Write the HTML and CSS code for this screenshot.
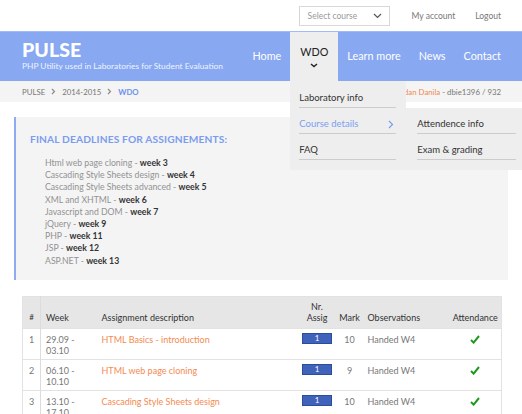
FILE: index.html
```html
<!DOCTYPE html>
<html lang="en">
<head>
<meta charset="utf-8">
<title>PULSE - WDO</title>
<link rel="stylesheet" href="styles.css">
</head>
<body>
<div class="topbar">
  <div class="select">Select course
    <svg class="select-chev" width="9" height="6" viewBox="0 0 9 6"><path d="M1 1l3.5 3.5L8 1" fill="none" stroke="#555" stroke-width="1.2"/></svg>
  </div>
  <a class="toplink" href="#">My account</a>
  <a class="toplink" href="#">Logout</a>
</div>

<header class="header">
  <div class="brand">
    <div class="logo">PULSE</div>
    <div class="tagline">PHP Utility used in Laboratories for Student Evaluation</div>
  </div>
  <nav class="nav">
    <a class="nav-link" href="#">Home</a>
    <div class="nav-link active">WDO
      <svg class="nav-chev" width="8" height="5" viewBox="0 0 8 5"><path d="M1 1l3 2.6L7 1" fill="none" stroke="#222" stroke-width="1.4"/></svg>
      <ul class="dropdown">
        <li class="dd-item">Laboratory info</li>
        <li class="dd-item current">Course details
          <svg class="dd-chev" width="6" height="9" viewBox="0 0 6 9"><path d="M1 1l3.5 3.5L1 8" fill="none" stroke="#7d9ef0" stroke-width="1.2"/></svg>
          <ul class="submenu">
            <li class="dd-item">Attendence info</li>
            <li class="dd-item">Exam &amp; grading</li>
          </ul>
        </li>
        <li class="dd-item">FAQ</li>
      </ul>
    </div>
    <a class="nav-link" href="#">Learn more</a>
    <a class="nav-link" href="#">News</a>
    <a class="nav-link" href="#">Contact</a>
  </nav>
</header>

<div class="crumbs">
  <div class="trail">
    <span>PULSE</span>
    <svg class="crumb-chev" width="5" height="7" viewBox="0 0 5 7"><path d="M1 1l2.5 2.5L1 6" fill="none" stroke="#888" stroke-width="1.1"/></svg>
    <span>2014-2015</span>
    <svg class="crumb-chev" width="5" height="7" viewBox="0 0 5 7"><path d="M1 1l2.5 2.5L1 6" fill="none" stroke="#888" stroke-width="1.1"/></svg>
    <span class="crumb-current">WDO</span>
  </div>
  <div class="user">Logged in as <span class="user-name">Bogdan Danila</span> - dbie1396 / 932</div>
</div>

<main class="content">
  <section class="deadlines">
    <h2 class="deadlines-title">FINAL DEADLINES FOR ASSIGNEMENTS:</h2>
    <ul class="deadlines-list">
      <li>Html web page cloning - <b>week 3</b></li>
      <li>Cascading Style Sheets design - <b>week 4</b></li>
      <li>Cascading Style Sheets advanced - <b>week 5</b></li>
      <li>XML and XHTML - <b>week 6</b></li>
      <li>Javascript and DOM - <b>week 7</b></li>
      <li>jQuery - <b>week 9</b></li>
      <li>PHP - <b>week 11</b></li>
      <li>JSP - <b>week 12</b></li>
      <li>ASP.NET - <b>week 13</b></li>
    </ul>
  </section>

  <table class="grades">
    <colgroup>
      <col class="c-num"><col class="c-week"><col class="c-desc"><col class="c-nr"><col class="c-mark"><col class="c-obs"><col class="c-att">
    </colgroup>
    <thead>
      <tr>
        <th class="num">#</th>
        <th>Week</th>
        <th>Assignment description</th>
        <th class="center">Nr.<br>Assig</th>
        <th class="center">Mark</th>
        <th>Observations</th>
        <th class="center">Attendance</th>
      </tr>
    </thead>
    <tbody>
      <tr>
        <td class="num">1</td>
        <td>29.09 -<br>03.10</td>
        <td><a class="task" href="#">HTML Basics - introduction</a></td>
        <td class="center"><span class="badge">1</span></td>
        <td class="center">10</td>
        <td>Handed W4</td>
        <td class="center"><svg class="check" width="10" height="9" viewBox="0 0 10 9"><path d="M1 5l2.6 2.6L9 1" fill="none" stroke="#1d9a1d" stroke-width="2"/></svg></td>
      </tr>
      <tr>
        <td class="num">2</td>
        <td>06.10 -<br>10.10</td>
        <td><a class="task" href="#">HTML web page cloning</a></td>
        <td class="center"><span class="badge">1</span></td>
        <td class="center">9</td>
        <td>Handed W4</td>
        <td class="center"><svg class="check" width="10" height="9" viewBox="0 0 10 9"><path d="M1 5l2.6 2.6L9 1" fill="none" stroke="#1d9a1d" stroke-width="2"/></svg></td>
      </tr>
      <tr>
        <td class="num">3</td>
        <td>13.10 -<br>17.10</td>
        <td><a class="task" href="#">Cascading Style Sheets design</a></td>
        <td class="center"><span class="badge">1</span></td>
        <td class="center">10</td>
        <td>Handed W4</td>
        <td class="center"><svg class="check" width="10" height="9" viewBox="0 0 10 9"><path d="M1 5l2.6 2.6L9 1" fill="none" stroke="#1d9a1d" stroke-width="2"/></svg></td>
      </tr>
    </tbody>
  </table>
</main>
</body>
</html>
```

FILE: styles.css
```css
* { box-sizing: border-box; }
html, body { margin: 0; padding: 0; }
body {
  font-family: Lato, "Open Sans", sans-serif;
  color: #444;
  background: #fff;
  overflow: hidden;
  width: 522px;
  height: 414px;
}
a { text-decoration: none; color: inherit; }
ul { list-style: none; margin: 0; padding: 0; }

.topbar {
  height: 31px;
  display: flex;
  align-items: center;
  justify-content: flex-end;
  padding-right: 21px;
  font-size: 8.5px;
  color: #777;
}
.select {
  width: 91px;
  height: 20px;
  border: 1px solid #d8d8d8;
  display: flex;
  align-items: center;
  justify-content: space-between;
  padding: 0 7px 0 8px;
  color: #999;
  margin-right: 22px;
}
.toplink { margin-left: 20px; }
.toplink:first-of-type { margin-left: 0; }

.header {
  height: 50px;
  background: #88a8f1;
  border-top: 1px solid #a3bbf5;
  display: flex;
  justify-content: space-between;
  padding-left: 22px;
  padding-right: 12px;
  color: #fff;
  white-space: nowrap;
}
.brand { padding-top: 7px; flex-shrink: 0; }
.logo { font-size: 19.5px; font-weight: 900; line-height: 22px; letter-spacing: 0.1px; }
.tagline { font-size: 8.4px; line-height: 11px; color: #eef3ff; }

.nav { display: flex; align-items: stretch; flex-shrink: 0; }
.nav-link {
  position: relative;
  display: flex;
  align-items: center;
  padding: 0 9px 2px;
  font-size: 10.8px;
  color: #fff;
}
.nav-link.active {
  background: #eeeeee;
  color: #222;
  flex-direction: column;
  justify-content: center;
  padding: 0 10px;
}
.nav-chev { display: block; margin-top: 5px; }

.dropdown {
  position: absolute;
  top: 100%;
  left: 0;
  width: 116px;
  background: #eeeeee;
  padding: 1px 0 10px;
  font-size: 9.5px;
  color: #333;
  z-index: 5;
}
.dd-item {
  position: relative;
  margin: 0 10px 0 9px;
  padding: 10px 0 4px;
  line-height: 11px;
  border-bottom: 1px solid #cccccc;
  white-space: nowrap;
}
.dd-item.current { color: #7d9ef0; }
.dd-chev { position: absolute; right: 2px; top: 12px; }
.submenu {
  position: absolute;
  left: calc(100% + 10px);
  top: 0;
  width: 116px;
  background: #eeeeee;
  padding: 0 0 10px;
  color: #333;
}
.submenu .dd-item { margin: 0 6px 0 11px; }

.crumbs {
  height: 21px;
  background: #f4f4f4;
  display: flex;
  align-items: center;
  justify-content: space-between;
  padding: 0 21px 0 22px;
  font-size: 7.8px;
  color: #777;
  white-space: nowrap;
}
.trail { display: flex; align-items: center; gap: 6px; }
.crumb-chev { display: block; }
.crumb-current { color: #6f92ea; font-weight: 700; }
.user-name { color: #f08850; }

.content { padding: 15px 14px 0; }
.deadlines {
  background: #f4f4f4;
  border-left: 2px solid #8eabf1;
  padding: 15px 0 14px 14px;
  height: 163px;
}
.deadlines-title {
  margin: 0 0 11px;
  font-size: 10.2px;
  line-height: 14px;
  font-weight: 700;
  color: #7b9cee;
  letter-spacing: 0.15px;
}
.deadlines-list {
  padding-left: 15px;
  font-size: 8.7px;
  line-height: 12.2px;
  color: #929292;
}
.deadlines-list b { color: #333; font-weight: 700; }

.grades {
  margin: 16px 0 0 8px;
  width: 479px;
  table-layout: fixed;
  border-collapse: collapse;
  border: 1px solid #e2e2e2;
  font-size: 9px;
  line-height: 11px;
}
.c-num { width: 18px; }
.c-week { width: 56px; }
.c-desc { width: 201px; }
.c-nr { width: 39px; }
.c-mark { width: 26px; }
.c-obs { width: 87px; }
.c-att { width: 52px; }
.grades th {
  background: #e6e6e6;
  color: #333;
  font-weight: 400;
  text-align: left;
  vertical-align: bottom;
  padding: 4px 5px 5px;
  height: 32px;
}
.grades td {
  vertical-align: top;
  padding: 5px 5px 3px;
  color: #777;
  border-top: 1px solid #e2e2e2;
  height: 31px;
}
.grades .num { text-align: center; border-right: 1px solid #dcdcdc; padding: 5px 0 3px; }
.grades th.num { padding: 4px 0 5px; font-size: 8px; }
.grades .center { text-align: center; padding-left: 0; padding-right: 0; }
.task { color: #f58a50; }
.badge {
  display: inline-block;
  width: 30px;
  height: 11px;
  line-height: 9px;
  background: #3f63bb;
  border: 1px solid #2c4c9c;
  color: #fff;
  font-size: 8px;
  margin-top: -1px;
  vertical-align: top;
}
.check { display: inline-block; vertical-align: top; margin-top: 1px; }
```
